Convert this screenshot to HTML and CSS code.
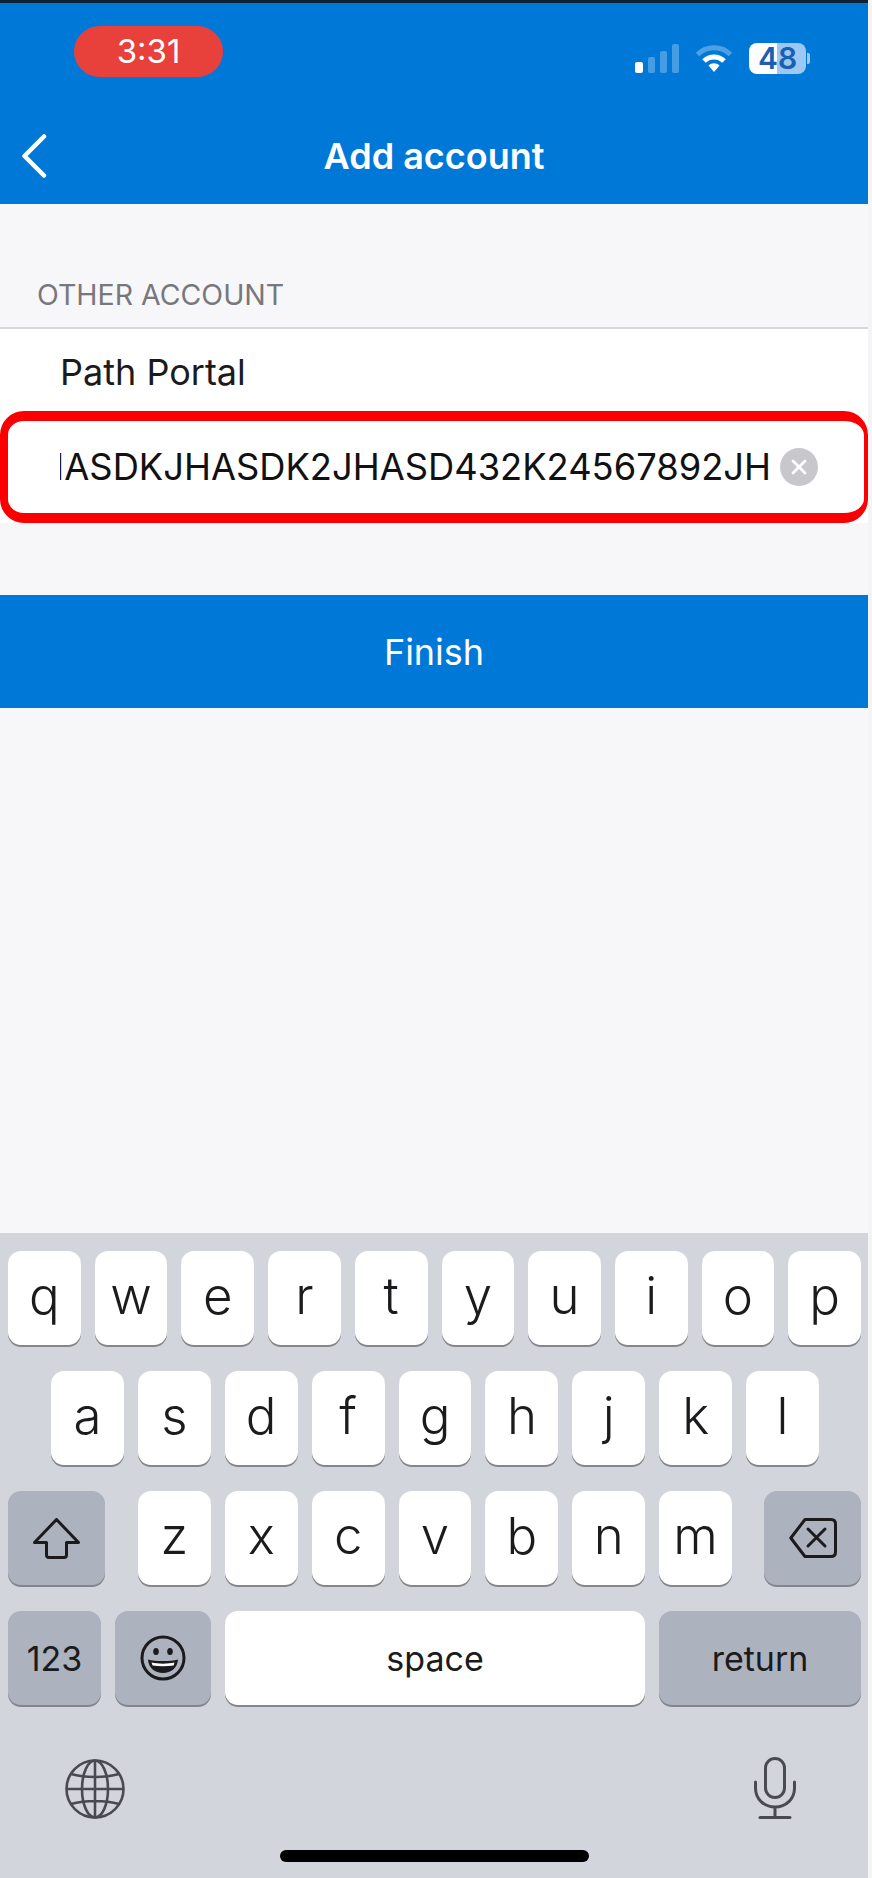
FILE: index.html
```html
<!DOCTYPE html>
<html lang="en">
<head>
  <meta charset="UTF-8">
  <meta name="viewport" content="width=device-width, initial-scale=1.0">
  <title>Add account</title>
  <link rel="stylesheet" href="styles.css">
</head>
<body>
  <div class="screen">
    <header class="header">
      <div class="status">
        <div class="pill">3:31</div>
        <div class="status-icons">
          <div class="signal">
            <span class="bar bar-1"></span>
            <span class="bar bar-2"></span>
            <span class="bar bar-3"></span>
            <span class="bar bar-4"></span>
          </div>
          <svg class="wifi" width="38" height="29" viewBox="0 0 38 29" fill="none">
            <path d="M2.5 10.5C11.5 1.5 26.5 1.5 35.5 10.5" stroke="#fff" stroke-opacity="0.3" stroke-width="5"/>
            <path d="M9 17C14.5 11.5 23.5 11.5 29 17" stroke="#fff" stroke-width="5"/>
            <path d="M13.5 21.5C16.5 18.5 21.5 18.5 24.5 21.5L19 28Z" fill="#fff"/>
          </svg>
          <div class="battery">
            <div class="battery-body">48</div>
            <div class="battery-nub"></div>
          </div>
        </div>
      </div>
      <div class="nav">
        <svg class="back" width="26" height="44" viewBox="0 0 26 44" fill="none">
          <path d="M23 2.5L3.5 22L23 41.5" stroke="#fff" stroke-width="4.5" stroke-linecap="round" stroke-linejoin="round"/>
        </svg>
        <div class="title">Add account</div>
      </div>
    </header>

    <main class="content">
      <div class="section-label">OTHER ACCOUNT</div>
      <div class="group">
        <div class="row-name">Path Portal</div>
        <div class="field">
          <div class="field-value"><span>HASDKJHASDK2JHASD432K24567892JH</span></div>
          <div class="clear">
            <svg width="16" height="16" viewBox="0 0 16 16" fill="none">
              <path d="M2 2L14 14M14 2L2 14" stroke="#fff" stroke-width="2.8" stroke-linecap="round"/>
            </svg>
          </div>
        </div>
      </div>
      <div class="finish">Finish</div>
    </main>

    <section class="keyboard">
      <div class="key-row">
        <div class="key">q</div><div class="key">w</div><div class="key">e</div><div class="key">r</div><div class="key">t</div>
        <div class="key">y</div><div class="key">u</div><div class="key">i</div><div class="key">o</div><div class="key">p</div>
      </div>
      <div class="key-row row-middle">
        <div class="key">a</div><div class="key">s</div><div class="key">d</div><div class="key">f</div><div class="key">g</div>
        <div class="key">h</div><div class="key">j</div><div class="key">k</div><div class="key">l</div>
      </div>
      <div class="key-row">
        <div class="key special key-shift">
          <svg width="47" height="41" viewBox="0 0 47 41" fill="none">
            <path d="M23.5 1.5L45.5 24.5H33.5V37C33.5 38.4 32.7 39.5 31 39.5H16C14.3 39.5 13.5 38.4 13.5 37V24.5H1.5Z" stroke="#1b1b1d" stroke-width="3" stroke-linejoin="round"/>
          </svg>
        </div>
        <div class="key">z</div><div class="key">x</div><div class="key">c</div><div class="key">v</div>
        <div class="key">b</div><div class="key">n</div><div class="key">m</div>
        <div class="key special key-delete">
          <svg width="48" height="40" viewBox="0 0 48 40" fill="none">
            <path d="M16 1.5H42C44.8 1.5 46.5 3.2 46.5 6V34C46.5 36.8 44.8 38.5 42 38.5H16L1.8 20Z" stroke="#1b1b1d" stroke-width="3" stroke-linejoin="round"/>
            <path d="M19 11L36 28M36 11L19 28" stroke="#1b1b1d" stroke-width="3" stroke-linecap="round"/>
          </svg>
        </div>
      </div>
      <div class="key-row">
        <div class="key special key-text key-123">123</div>
        <div class="key special key-emoji">
          <svg width="46" height="46" viewBox="0 0 46 46" fill="none">
            <circle cx="23" cy="23" r="21" stroke="#1b1b1d" stroke-width="3"/>
            <ellipse cx="16" cy="16.5" rx="2.8" ry="3.6" fill="#1b1b1d"/>
            <ellipse cx="30" cy="16.5" rx="2.8" ry="3.6" fill="#1b1b1d"/>
            <path d="M8 24.5C15 26.5 31 26.5 38 24.5C37.5 33 31 38 23 38C15 38 8.5 33 8 24.5Z" fill="#1b1b1d"/>
            <path d="M11.5 27.5C18 29 28 29 34.5 27.5L33.6 30.5C27 31.6 19 31.6 12.6 30.5Z" fill="#fff"/>
          </svg>
        </div>
        <div class="key key-text key-space">space</div>
        <div class="key special key-text key-return">return</div>
      </div>
      <div class="key-tools">
        <svg width="60" height="60" viewBox="0 0 60 60" fill="none" stroke="#4a4b50" stroke-width="2.6">
          <circle cx="30" cy="30" r="28.5"/>
          <ellipse cx="30" cy="30" rx="13" ry="28.5"/>
          <path d="M30 1.5V58.5M1.5 30H58.5M6 15C20 19 40 19 54 15M6 45C20 41 40 41 54 45"/>
        </svg>
        <svg width="42" height="62" viewBox="0 0 42 62" fill="none" stroke="#4a4b50" stroke-width="3" stroke-linecap="round">
          <rect x="11.5" y="1.5" width="19" height="39" rx="9.5"/>
          <path d="M1.5 25V31C1.5 42 10 50 21 50C32 50 40.5 42 40.5 31V25M21 50V60M6 60.5H36"/>
        </svg>
      </div>
      <div class="home-bar"></div>
    </section>
  </div>
</body>
</html>
```

FILE: styles.css
```css
* {
  box-sizing: border-box;
}
body {
  margin: 0;
  background: #f4f4f6;
  font-family: Inter, 'Liberation Sans', sans-serif;
}
.screen {
  width: 868px;
  height: 1878px;
  display: flex;
  flex-direction: column;
  background: #f7f7fa;
  border-top: 3px solid #0e2236;
}

/* blue header */
.header {
  background: #0078d8;
  color: #fff;
  height: 201px;
}
.status {
  height: 105px;
  padding: 23px 58px 0 74px;
  display: flex;
  justify-content: space-between;
  align-items: flex-start;
}
.pill {
  width: 149px;
  height: 51px;
  border-radius: 26px;
  background: #e8403a;
  font-size: 33px;
  line-height: 51px;
  text-align: center;
}
.status-icons {
  display: flex;
  align-items: center;
  gap: 16px;
  margin-top: 17px;
}
.signal {
  display: flex;
  align-items: flex-end;
  gap: 5px;
  height: 29px;
}
.bar {
  width: 7px;
  border-radius: 2px;
  background: rgba(255, 255, 255, 0.28);
}
.bar-1 {
  width: 8px;
  height: 11px;
  background: #fff;
}
.bar-2 {
  height: 16px;
}
.bar-3 {
  height: 22px;
}
.bar-4 {
  height: 29px;
}
.battery {
  display: flex;
  align-items: center;
  gap: 1px;
}
.battery-body {
  width: 57px;
  height: 31px;
  border-radius: 8px;
  background: linear-gradient(90deg, #fff 49%, #9cc8f2 49%);
  color: #1b5fb5;
  font-size: 30px;
  font-weight: 600;
  line-height: 31px;
  text-align: center;
}
.battery-nub {
  width: 3px;
  height: 11px;
  border-radius: 0 2px 2px 0;
  background: #9cc8f2;
}
.nav {
  height: 96px;
  padding-left: 21px;
  display: flex;
  align-items: center;
  position: relative;
}
.title {
  position: absolute;
  left: 0;
  right: 0;
  text-align: center;
  font-size: 36px;
  font-weight: 600;
}

/* form */
.content {
  flex: 1;
}
.section-label {
  height: 123px;
  padding: 75px 0 0 37px;
  font-size: 28.5px;
  line-height: 32px;
  color: #77777c;
}
.group {
  background: #fff;
  border-top: 2px solid #d8d8dc;
  margin-bottom: 72px;
}
.row-name {
  height: 82px;
  padding-left: 60px;
  font-size: 36px;
  line-height: 86px;
  color: #1b1b1d;
}
.field {
  height: 112px;
  padding-left: 52px;
  padding-right: 46px;
  background: #fff;
  border: solid #fa0000;
  border-width: 10px 4px 10px 8px;
  border-radius: 24px;
  display: flex;
  align-items: center;
  gap: 9px;
}
.field-value {
  flex: 1;
  min-width: 0;
  overflow: hidden;
  display: flex;
  justify-content: flex-end;
  font-size: 36.3px;
  color: #111;
  white-space: nowrap;
}
.clear {
  width: 38px;
  height: 38px;
  flex: none;
  border-radius: 50%;
  background: #c8c8cc;
  display: flex;
  align-items: center;
  justify-content: center;
}
.finish {
  height: 113px;
  background: #0078d8;
  color: #fff;
  font-size: 36px;
  line-height: 115px;
  text-align: center;
}

/* keyboard */
.keyboard {
  height: 645px;
  padding: 18px 7px 0 8px;
  background: #d3d5dd;
  display: flex;
  flex-direction: column;
  gap: 26px;
}
.key-row {
  display: flex;
  gap: 14px;
}
.row-middle {
  padding: 0 42px 0 43px;
}
.key {
  flex: 1;
  height: 94px;
  border-radius: 13px;
  background: #fff;
  box-shadow: 0 2px 0 #84868c;
  color: #1b1b1d;
  font-size: 51px;
  font-weight: 350;
  display: flex;
  align-items: center;
  justify-content: center;
  padding-bottom: 6px;
}
.special {
  background: #adb2bf;
  padding-bottom: 0;
}
.key-shift {
  flex: none;
  width: 97px;
  margin-right: 19px;
}
.key-delete {
  flex: none;
  width: 97px;
  margin-left: 18px;
}
.key-text {
  font-size: 34px;
  font-weight: 400;
  padding-bottom: 0;
}
.key-123 {
  flex: none;
  width: 93px;
}
.key-emoji {
  flex: none;
  width: 96px;
}
.key-space {
  flex: none;
  width: 420px;
}
.key-return {
  flex: none;
  width: 202px;
}
.key-tools {
  height: 62px;
  margin-top: 26px;
  padding: 0 65px 0 57px;
  display: flex;
  align-items: flex-end;
  justify-content: space-between;
}
.home-bar {
  width: 309px;
  height: 12px;
  margin: 5px auto 0;
  border-radius: 6px;
  background: #000;
}
```
